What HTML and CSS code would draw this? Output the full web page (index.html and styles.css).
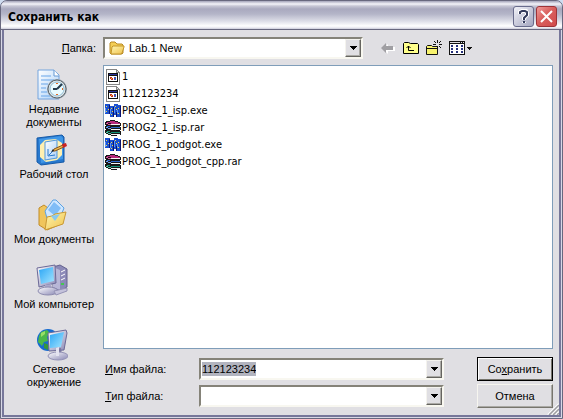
FILE: index.html
```html
<!DOCTYPE html>
<html lang="ru">
<head>
<meta charset="utf-8">
<title>Сохранить как</title>
<link rel="stylesheet" href="styles.css">
</head>
<body>
<svg class="defs" aria-hidden="true">
  <defs>
    <linearGradient id="gold" x1="0" y1="0" x2="1" y2="1"><stop offset="0" stop-color="#fff6b0"/><stop offset="1" stop-color="#efc24c"/></linearGradient>
    <linearGradient id="screen" x1="0" y1="0" x2="1" y2="1"><stop offset="0" stop-color="#2aa5f5"/><stop offset="1" stop-color="#a5e6ff"/></linearGradient>
    <linearGradient id="metal" x1="0" y1="0" x2="1" y2="1"><stop offset="0" stop-color="#fff"/><stop offset="1" stop-color="#8886b4"/></linearGradient>
    <linearGradient id="sheet" x1="0" y1="0" x2="1" y2="1"><stop offset="0" stop-color="#fff"/><stop offset="1" stop-color="#a9cff8"/></linearGradient>
    <symbol id="doc" viewBox="0 0 16 16" shape-rendering="crispEdges">
      <path d="M1 0h11v1h1v1h1v1h1v13H1z" fill="#858585"/>
      <path d="M2 1h9v3h3v11H2z" fill="#fff"/>
      <path d="M12 2h1v1h-1z" fill="#ddd"/>
      <path d="M3 4h10v9H3z" fill="#111"/><path d="M4 5h8v1H4z" fill="#26319b"/><path d="M4 7h8v5H4z" fill="#fff"/>
      <path d="M5 8h2v1h1v2H6v-1H5z" fill="#c8321f"/><path d="M6 9h1v1H6z" fill="#f0b030"/><path d="M9 8h2v3H9z" fill="#2c58c8"/><path d="M9 9h1v1H9z" fill="#c8321f"/>
    </symbol>
    <symbol id="exe" viewBox="0 0 16 16" shape-rendering="crispEdges">
      <path d="M0 1h5v10H0zM5 3h4v11H5zM9 1h4v11H9zM12 2h4v12h-4z" fill="#1a50d0"/>
      <path d="M4 2h1v9H4zM8 4h1v10H8zM11 9h1v5h-1zM15 3h1v11h-1z" fill="#0a1470"/>
      <path d="M1 3h1v1H1zM3 6h1v1H3zM1 8h1v1H1zM6 5h1v1H6zM7 8h1v1H7zM6 11h1v1H6zM10 3h1v1h-1zM11 6h1v1h-1zM13 5h1v1h-1zM13 10h1v1h-1z" fill="#f5df44"/>
      <path d="M0 5h1v5H0zM5 6h1v5H5zM9 4h1v6H9zM12 7h1v4h-1z" fill="#5c96f8"/>
    </symbol>
    <symbol id="rar" viewBox="0 0 16 16" shape-rendering="crispEdges">
      <path d="M0 2h1V1h4V0h5v1h3v1h2v1h1v3h-1v1h1v3h-1v1h1v4h-4v1H6v-1H3v-1H1v-1H0v-3h1V9H0V6h1V5H0z" fill="#181818"/>
      <path d="M2 2h3V1h5v1h3v1h2v1H6V3H2z" fill="#b6287c"/><path d="M1 3h2v1h3v1H3V4H1z" fill="#e05aa4"/><path d="M6 4h9v1H6z" fill="#f4f4f4"/>
      <path d="M2 6h3v1h10v1H6V7H2z" fill="#2b66cc"/><path d="M1 7h2v1h3v1H3V8H1z" fill="#6ca0f4"/><path d="M6 9h9v1H6z" fill="#f4f4f4"/>
      <path d="M2 11h3v1h10v1H6v-1H2z" fill="#169476"/><path d="M1 12h2v1h3v1H3v-1H1z" fill="#4cc8a8"/><path d="M6 14h9v1H6z" fill="#f4f4f4"/>
    </symbol>
    <symbol id="arrow" viewBox="0 0 7 4"><path d="M0 0h7v1H6v1H5v1H4v1H3V3H2V2H1V1H0z" fill="#000" shape-rendering="crispEdges"/></symbol>
  </defs>
</svg>

<main class="dialog">
  <header class="titlebar">
    <h1>Сохранить как</h1>
    <button class="cap help" type="button" aria-label="Справка"><svg viewBox="0 0 19 19"><path d="M6 7V5l2-1h4l1 2v2l-3 3v2M10 15v1" fill="none" stroke="#fff" stroke-width="4"/><path d="M6 7V5l2-1h3l2 1v3l-3 3v2M9 15h2" fill="none" stroke="#343b5c" stroke-width="2"/></svg></button>
    <button class="cap close" type="button" aria-label="Закрыть"><svg viewBox="0 0 19 19"><path d="M4 4l11 11M15 4L4 15" stroke="#fff" stroke-width="2"/></svg></button>
  </header>

  <div class="body">
    <div class="toolbar">
      <label for="folder"><u>П</u>апка:</label>
      <div class="combo place">
        <svg class="small" viewBox="0 0 16 16"><path d="M1 13V3l1-1h4l2 2h5l1 1v8l-1 1H2z" fill="#f4ce55" stroke="#b88a24"/><path d="M3 7l1-1h11v1l-2 6-1 1H2z" fill="url(#gold)" stroke="#c4972c"/></svg>
        <select id="folder"><option>Lab.1 New</option></select>
        <span class="drop"><svg><use href="#arrow"/></svg></span>
      </div>
      <nav class="tools" aria-label="Навигация">
        <button type="button" aria-label="Назад" disabled><svg viewBox="0 0 16 16" width="16" height="16"><path d="M2 8l5-5v3h7v4H7v3z" fill="#fff" transform="translate(1 1)"/><path d="M1 8l5-5v3h7v4H6v3z" fill="#a09fa3"/></svg></button>
        <button type="button" aria-label="На один уровень вверх"><svg viewBox="0 0 16 16" width="16" height="16"><path d="M.5 13.500v-10l1-1h4l2 1h7l1 1v9z" fill="#ffff8b" stroke="#000"/><path d="M5.500 6v4.500H11M3.500 8l2-2 2 2" fill="none" stroke="#000"/></svg></button>
        <button type="button" aria-label="Создать папку"><svg viewBox="0 0 16 16" width="16" height="16"><path d="M.5 14.500v-8l1-1h4l1 1h5v8z" fill="#f7f26d" stroke="#111"/><path d="M.5 8.500h11" stroke="#111"/><path d="M11.500 0v3M11.500 6v3M7 4.500h3M13 4.500h3M8 1l2 2M13 6l2 2M15 1l-2 2" stroke="#111"/></svg></button>
        <button type="button" aria-label="Вид"><svg viewBox="0 0 23 16" width="23" height="16" shape-rendering="crispEdges"><path d="M0 1h16v14H0z" fill="#111"/><path d="M1 4h14v10H1z" fill="#fff"/><path d="M1 2h10v1H1zM12 2h1v1h-1zM14 2h1v1h-1z" fill="#e0dfe3"/><path d="M2 5h2v2H2zM7 5h2v2H7zM12 5h2v2h-2zM2 8h2v2H2zM7 8h2v2H7zM12 8h2v2h-2zM2 11h2v2H2zM7 11h2v2H7zM12 11h2v2h-2z" fill="#26317d"/><path d="M18 7h5v1h-1v1h-1v1h-1V9h-1V8h-1z" fill="#111"/></svg></button>
      </nav>
    </div>

    <nav class="places" aria-label="Расположения">
      <a href="#recent"><svg viewBox="0 0 32 32"><path d="M2 1h16l5 5v24H2z" fill="url(#sheet)" stroke="#74a4dd"/><path d="M18 1v6h5" fill="#fff" stroke="#6598d3"/><path d="M5 7h10M5 11h13M5 15h7M5 19h5M5 23h6M5 27h9" stroke="#69a5e8"/><circle cx="21" cy="20" r="10" fill="#9ba5ad"/><circle cx="21" cy="20" r="9" fill="#dfe6e8" stroke="#59656e"/><circle cx="21" cy="20" r="7" fill="#e9fbff" stroke="#93bed6"/><path d="M21 20l5-5M21 20h-4" stroke="#263b4d" stroke-width="2"/><path d="M21 14v1M27 20h-1M21 26v-1" stroke="#e36a25" stroke-width="2"/></svg><span>Недавние<br>документы</span></a>
      <a href="#desktop"><svg viewBox="0 0 32 32"><path d="M1 4l25-3 2 2v25L5 31l-4-3z" fill="#2778ce" stroke="#1559a7"/><path d="M3 5l22-3 2 2v21L5 29z" fill="#3f97e8"/><path d="M4 11l5-5 11-1 6 4v12l-5 5-11 2-6-5z" fill="#fff0b0"/><path d="M9 8l12-2v18L9 26z" fill="url(#sheet)" stroke="#5197db"/><path d="M12 15v7l7-1M13 21l6-6" fill="none" stroke="#297acb"/><path d="M17 17l1-2 9-4 1 2-9 4z" fill="#efba4e" stroke="#82531f"/><path d="M26 10l4-1 1 3-4 2z" fill="#c82525"/><path d="M15 18l2-3 1 2z" fill="#222"/></svg><span>Рабочий стол</span></a>
      <a href="#documents"><svg viewBox="0 0 32 32"><path d="M3 9l5-3 4 3 13 2v14l-14 6-8-5z" fill="#f0c55c" stroke="#c18b27"/><path d="M9 12l8-11h3l8 8-4 10-12 4z" fill="#cfe7ff" stroke="#5ba1e2"/><path d="M12 11l6-8 7 6-6 8z" fill="#80bdf7"/><path d="M9 31l2-13 5-1 3-2 11-2-3 12z" fill="url(#gold)" stroke="#c99834"/><path d="M15 17l9-2-5 7z" fill="#8ac9ee"/></svg><span>Мои документы</span></a>
      <a href="#computer"><svg viewBox="0 0 32 32"><path d="M17 3l7-2 7 4v18l-7 4-7-4z" fill="#8c8ab8" stroke="#64628f"/><path d="M17 3l7 3v20l-7-3z" fill="#b8b7d7"/><path d="M25 8l4-2M25 12l4-2M25 16l4-2" stroke="#fff"/><path d="M25 20h3" stroke="#46c653" stroke-width="2"/><path d="M1 4l18-3 1 18-17 4z" fill="url(#metal)" stroke="#6c6997"/><path d="M3 6l14-3 1 14L5 20z" fill="url(#screen)"/><path d="M9 21l6-1 1 5H9z" fill="#aaa8ca"/><ellipse cx="12" cy="27" rx="10" ry="4" fill="url(#metal)" stroke="#8d8baf"/><path d="M18 27l13-3v3l-11 4z" fill="#c4c2db" stroke="#9593b6"/></svg><span>Мой компьютер</span></a>
      <a href="#network"><svg viewBox="0 0 32 32"><circle cx="12" cy="11" r="11" fill="#176bd0"/><path d="M5 3l6-2 3 3-3 4 1 4-4 1-2 4-4-4 1-6z" fill="#4cb84a"/><path d="M8 14l5 2-1 5-4-2z" fill="#37963b"/><path d="M5 4l4-2v3L5 8z" fill="#9adf67"/><path d="M12 4l18-3 1 3-3 17-15 1z" fill="url(#metal)" stroke="#6c6997"/><path d="M14 6l14-3-3 15-11 1z" fill="url(#screen)"/><path d="M20 20l5-1 1 8h-6z" fill="#79779f"/><ellipse cx="22" cy="27" rx="10" ry="4" fill="url(#metal)" stroke="#9492b6"/><path d="M20 19l3-1v9h-3z" fill="#e4e3f0"/></svg><span>Сетевое<br>окружение</span></a>
    </nav>

    <ul class="files">
      <li><svg class="small"><use href="#doc"/></svg>1</li>
      <li><svg class="small"><use href="#doc"/></svg>112123234</li>
      <li><svg class="small"><use href="#exe"/></svg>PROG2_1_isp.exe</li>
      <li><svg class="small"><use href="#rar"/></svg>PROG2_1_isp.rar</li>
      <li><svg class="small"><use href="#exe"/></svg>PROG_1_podgot.exe</li>
      <li><svg class="small"><use href="#rar"/></svg>PROG_1_podgot_cpp.rar</li>
    </ul>

    <form class="fields">
      <label for="name"><u>И</u>мя файла:</label>
      <div class="combo"><input id="name" type="text" value="112123234"><button class="drop" type="button" aria-label="Показать имена"><svg><use href="#arrow"/></svg></button></div>
      <button class="push default" type="submit">Со<u>х</u>ранить</button>
      <label for="type"><u>Т</u>ип файла:</label>
      <div class="combo"><select id="type"><option></option></select><span class="drop"><svg><use href="#arrow"/></svg></span></div>
      <button class="push" type="button">Отмена</button>
    </form>
  </div>
  <svg class="grip" viewBox="0 0 12 12" aria-hidden="true"><path d="M1 12L12 1M5 12l7-7M9 12l3-3" stroke="#fff" stroke-width="2"/><path d="M2 12L12 2M6 12l6-6M10 12l2-2" stroke="#9d9da1" stroke-width="1.500"/></svg>
</main>
</body>
</html>
```
FILE: styles.css
```css
* { box-sizing: border-box; }

body {
  margin: 0;
  background: #cfdcf0;
  color: #000;
  font: 11px/13px "Liberation Sans", sans-serif;
}

button, input, select { font: inherit; color: inherit; }
svg { display: block; }
.defs { position: absolute; width: 0; height: 0; }
.small { width: 16px; height: 16px; flex: none; }

.dialog {
  position: relative;
  display: flex;
  flex-direction: column;
  min-height: 100vh;
  border: 1px solid #68687f;
  border-radius: 7px 7px 0 0;
  background: #e0dfe3;
  box-shadow: inset 0 0 0 1px #d8d8e6, inset 0 0 0 3px #77779a;
  overflow: hidden;
}

.titlebar {
  display: flex;
  align-items: center;
  gap: 2px;
  height: 29px;
  padding: 3px 5px 0 7px;
  border-bottom: 1px solid #68687f;
  background: linear-gradient(#a3a3b9 0, #f4f4fa 3px, #c6c6d5 5px, #a9a9bf 8px, #b4b5c8 13px, #dcdde7 20px, #fff 25px, #e6e6ee 27px, #a6a6bc 29px);
}

.titlebar h1 {
  flex: 1;
  margin: 0;
  font: bold 12px/16px "DejaVu Sans Condensed", "DejaVu Sans", sans-serif;
}

.cap {
  width: 21px;
  height: 21px;
  padding: 0;
  border: 1px solid #686b8c;
  border-radius: 3px;
  background: linear-gradient(135deg, #f1f1f8, #a4a6c0);
}

.cap svg { width: 19px; height: 19px; }
.close { border-color: #9d3338; background: linear-gradient(135deg, #ef9a98, #d9605e 45%, #d14a4a); }

.body {
  flex: 1;
  display: grid;
  grid-template-columns: 90px 1fr;
  grid-template-rows: auto 1fr auto;
  padding: 7px 9px 10px 8px;
  column-gap: 4px;
}

.toolbar {
  grid-column: 1 / -1;
  display: flex;
  align-items: center;
  margin-bottom: 6px;
}

.toolbar label { width: 94px; padding-right: 7px; text-align: right; }

.combo {
  display: flex;
  align-items: center;
  height: 22px;
  min-width: 0;
  border: 2px solid;
  border-color: #858379 #f8f7f0 #f8f7f0 #858379;
  background: #fff;
  position: relative;
}

.place { flex: 1; padding-left: 4px; }

.combo select {
  flex: 1;
  min-width: 0;
  height: 18px;
  padding: 0 18px 0 4px;
  border: 0;
  outline: 0;
  background: transparent;
  appearance: none;
}

.combo input {
  field-sizing: content;
  height: 14px;
  margin: 0 auto 0 1px;
  padding: 0;
  border: 0;
  outline: 0;
  background: #b2b4bf;
}

.drop {
  position: absolute;
  top: 0;
  right: 0;
  bottom: 0;
  width: 16px;
  padding: 0;
  display: grid;
  place-items: center;
  border: 1px solid;
  border-color: #f4f3ee #65645f #65645f #f4f3ee;
  box-shadow: inset -1px -1px #aaa9a5;
  background: #e0dfe3;
  pointer-events: none;
}

.drop svg { width: 7px; height: 4px; }

.tools { display: flex; gap: 7px; width: 190px; padding-left: 17px; }

.tools button { padding: 0; border: 0; background: none; }

.places { grid-row: 2 / 4; grid-column: 1; padding-top: 4px; }

.places a {
  display: flex;
  flex-direction: column;
  align-items: center;
  gap: 2px;
  height: 65px;
  color: inherit;
  text-align: center;
  text-decoration: none;
  white-space: nowrap;
}

.places svg { width: 32px; height: 32px; flex: none; margin-right: 4px; }

.files {
  grid-column: 2;
  margin: 0;
  padding: 2px 1px;
  border: 1px solid #7f9db9;
  background: #fff;
  list-style: none;
  font: 11px/17px "DejaVu Sans Condensed", "DejaVu Sans", sans-serif;
}

.files li { display: flex; align-items: center; gap: 1px; height: 17px; }

.fields {
  grid-column: 2;
  display: grid;
  grid-template-columns: 96px 1fr 76px;
  align-items: center;
  row-gap: 3px;
  padding-top: 8px;
}

.fields label { padding-left: 2px; }
.fields .combo { margin-right: 33px; }

.push {
  height: 24px;
  padding: 0;
  border: 1px solid;
  border-color: #f6f5ef #77756d #77756d #f6f5ef;
  box-shadow: inset -1px -1px #aaa9a5;
  background: #e0dfe3;
}

.default { border-color: #000; box-shadow: inset 1px 1px #fff, inset -1px -1px #77756d; }

.grip { position: absolute; right: 3px; bottom: 3px; width: 12px; height: 12px; }
```
